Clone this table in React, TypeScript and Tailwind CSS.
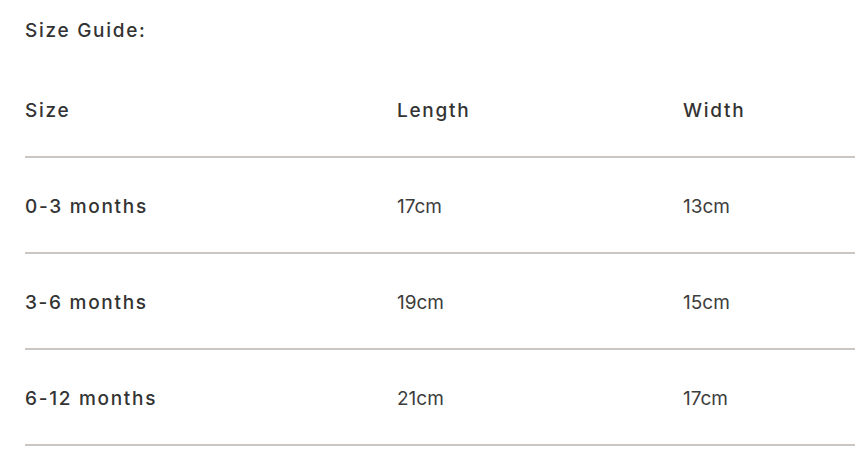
const rows = [
  { size: "0-3 months", length: "17cm", width: "13cm" },
  { size: "3-6 months", length: "19cm", width: "15cm" },
  { size: "6-12 months", length: "21cm", width: "17cm" },
];

export default function App() {
  return (
    <div
      className="w-[862px] h-[466px] bg-white pl-[25px] pr-[7px] text-[#333]"
      style={{ fontFamily: "Inter, 'Open Sans', sans-serif" }}
    >
      <h3 className="pt-[19px] text-[19px] leading-[24px] font-medium tracking-[0.09em]">
        Size Guide:
      </h3>

      <div className="mt-[19px]">
        <div className="grid grid-cols-[372px_286px_1fr] h-[96px] pt-[4px] items-center border-b-2 border-[#cbc6c2] text-[19px] font-medium tracking-[0.09em]">
          <div>Size</div>
          <div>Length</div>
          <div>Width</div>
        </div>
        {rows.map((row) => (
          <div
            key={row.size}
            className="grid grid-cols-[372px_286px_1fr] h-[96px] pt-[4px] items-center border-b-2 border-[#cbc6c2] text-[19px]"
          >
            <div className="font-medium tracking-[0.09em]">{row.size}</div>
            <div className="text-[#3d3d3d]">{row.length}</div>
            <div className="text-[#3d3d3d]">{row.width}</div>
          </div>
        ))}
      </div>
    </div>
  );
}
